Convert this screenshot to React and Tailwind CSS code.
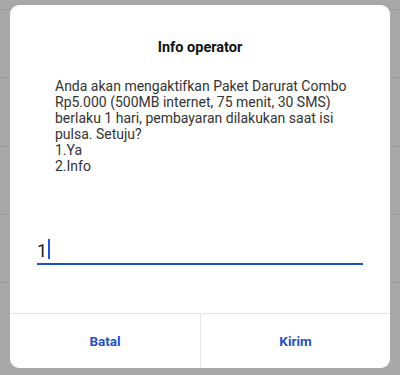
import React from "react";

const bodyLines = [
  "Anda akan mengaktifkan Paket Darurat Combo",
  "Rp5.000 (500MB internet, 75 menit, 30 SMS)",
  "berlaku 1 hari, pembayaran dilakukan saat isi",
  "pulsa. Setuju?",
  "1.Ya",
  "2.Info",
];

const UssdDialog = () => {
  return (
    <div className="absolute left-[10px] top-[5px] w-[380px] bg-white rounded-[9px] overflow-hidden flex flex-col">
      <h2 className="pt-[33px] text-center text-[14.5px] leading-[20px] font-bold text-[#111]">Info operator</h2>
      <div className="mt-[20px] pl-[45px] text-[14px] leading-[16px] text-[#333]">
        {bodyLines.map((line) => (
          <div key={line}>{line}</div>
        ))}
      </div>
      <div className="mt-[65px] mx-[27px] border-b-2 border-[#1f4fc4] h-[26px] flex items-start">
        <span className="text-[18px] leading-[24px] text-[#222]">1</span>
        <span className="ml-[1px] w-[2px] h-[20px] bg-[#2356d6]" />
      </div>
      <div className="mt-[48px] h-[55px] border-t border-[#e6e6e6] grid grid-cols-2">
        <button className="flex items-center justify-center text-[13.5px] font-bold text-[#2152c2]">Batal</button>
        <button className="flex items-center justify-center text-[13.5px] font-bold text-[#2152c2] border-l border-[#e6e6e6]">Kirim</button>
      </div>
    </div>
  );
};

export default function App() {
  return (
    <div className="relative w-[400px] h-[375px] overflow-hidden bg-[#a8a8a8]" style={{ fontFamily: "Roboto, 'Noto Sans', sans-serif" }}>
      {/* dimmed list behind the dialog */}
      <div className="flex flex-col">
        <div className="h-[10px] border-b border-[#9b9b9b]" />
        <div className="h-[68px] border-b border-[#9b9b9b]" />
        <div className="h-[69px] border-b border-[#9b9b9b]" />
        <div className="h-[68px] border-b border-[#9b9b9b]" />
        <div className="h-[68px] border-b border-[#9b9b9b]" />
      </div>
      <UssdDialog />
    </div>
  );
}
